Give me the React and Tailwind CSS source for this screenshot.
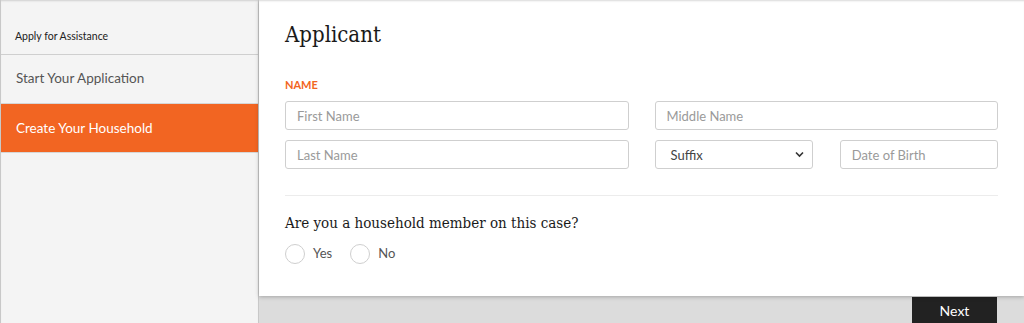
import React from "react";

export default function App() {
  return (
    <div className="flex h-[323px] w-[1024px] overflow-hidden bg-[#dcdcdc] font-['Lato',sans-serif]">
      <aside className="flex h-full w-[259px] shrink-0 flex-col border-x border-[#c8c8c8] bg-[#f4f4f4] shadow-[inset_0_2px_2px_-1px_rgba(0,0,0,0.15)]">
        <div className="flex h-[55px] items-end border-b border-[#cfcfcf] pb-[9px] pl-[14px] text-[10.5px] text-[#222]">
          Apply for Assistance
        </div>
        <div className="flex h-[49px] items-center border-b border-[#d6d6d6] pb-[1px] pl-[15px] text-[13.5px] text-[#555]">
          Start Your Application
        </div>
        <div className="flex h-[49px] items-center border-b border-[#d6d6d6] bg-[#f26522] pl-[15px] text-[13.5px] text-white">
          Create Your Household
        </div>
      </aside>
      <div className="flex flex-1 flex-col">
        <main className="relative z-10 h-[296px] bg-white px-[26px] pt-[19px] shadow-[0_1px_4px_rgba(0,0,0,0.25),inset_0_2px_2px_-1px_rgba(0,0,0,0.15)]">
          <h1 className="font-['DejaVu_Serif_Condensed','DejaVu_Serif',serif] text-[22px] leading-[32px] text-[#1a1a1a]">Applicant</h1>
          <div className="mt-[27px] text-[11px] font-bold leading-[14px] text-[#f26522]">NAME</div>
          <div className="mt-[9px] grid grid-cols-2 gap-x-[26px] gap-y-[10px]">
            <input
              placeholder="First Name"
              className="h-[29px] rounded-[3px] border border-[#cfcfcf] px-[11px] text-[13px] text-[#333] placeholder:text-[#9a9a9a] outline-none"
            />
            <input
              placeholder="Middle Name"
              className="h-[29px] rounded-[3px] border border-[#cfcfcf] px-[11px] text-[13px] text-[#333] placeholder:text-[#9a9a9a] outline-none"
            />
            <input
              placeholder="Last Name"
              className="h-[29px] rounded-[3px] border border-[#cfcfcf] px-[11px] text-[13px] text-[#333] placeholder:text-[#9a9a9a] outline-none"
            />
            <div className="grid grid-cols-2 gap-x-[27px]">
              <div className="relative flex h-[29px] items-center rounded-[3px] border border-[#cfcfcf] pl-[15px] pt-[2px] text-[13px] text-[#444]">
                Suffix
                <svg className="absolute right-[8px] top-[10px]" width="9" height="7" viewBox="0 0 9 7">
                  <path d="M1 1.5 L4.5 5 L8 1.5" fill="none" stroke="#333" strokeWidth="1.6" />
                </svg>
              </div>
              <input
                placeholder="Date of Birth"
                className="h-[29px] rounded-[3px] border border-[#cfcfcf] px-[11px] text-[13px] text-[#333] placeholder:text-[#9a9a9a] outline-none"
              />
            </div>
          </div>
          <div className="mt-[26px] border-t border-[#ececec]" />
          <div className="mt-[17px] font-['DejaVu_Serif_Condensed','DejaVu_Serif',serif] text-[15px] leading-[20px] text-[#1a1a1a]">
            Are you a household member on this case?
          </div>
          <div className="mt-[11px] flex items-center text-[13px] text-[#555]">
            <span className="h-[20px] w-[20px] rounded-full border border-[#cfcfcf] bg-white" />
            <span className="ml-[8px]">Yes</span>
            <span className="ml-[18px] h-[20px] w-[20px] rounded-full border border-[#cfcfcf] bg-white" />
            <span className="ml-[8px]">No</span>
          </div>
        </main>
        <div className="flex flex-1 justify-end pr-[27px] pt-[1px]">
          <button className="h-full w-[85px] bg-[#222] text-[14px] text-white">Next</button>
        </div>
      </div>
    </div>
  );
}
